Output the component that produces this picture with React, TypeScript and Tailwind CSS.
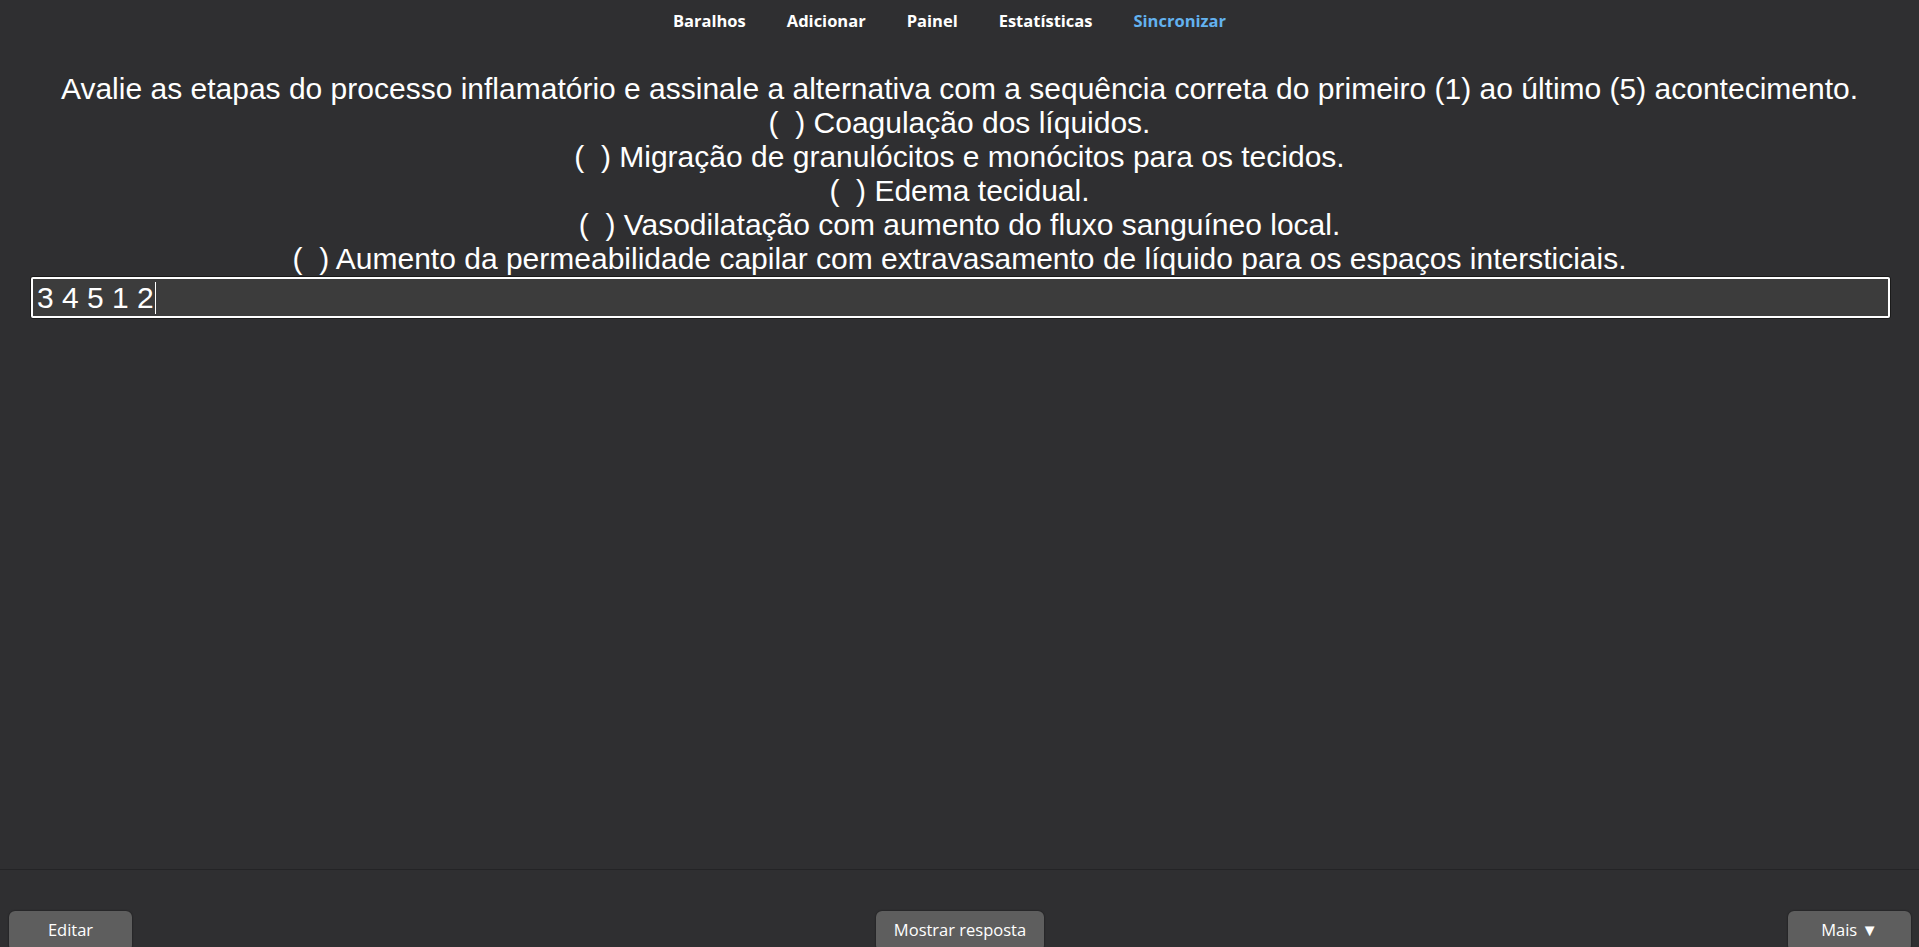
import React from "react";

const lines = [
  "Avalie as etapas do processo inflamatório e assinale a alternativa com a sequência correta do primeiro (1) ao último (5) acontecimento.",
  "(\u00a0\u00a0) Coagulação dos líquidos.",
  "(\u00a0\u00a0) Migração de granulócitos e monócitos para os tecidos.",
  "(\u00a0\u00a0) Edema tecidual.",
  "(\u00a0\u00a0) Vasodilatação com aumento do fluxo sanguíneo local.",
  "(\u00a0\u00a0) Aumento da permeabilidade capilar com extravasamento de líquido para os espaços intersticiais.",
];

const navItems = ["Baralhos", "Adicionar", "Painel", "Estatísticas"];

export default function App() {
  return (
    <div className="h-[947px] w-full bg-[#2f2f31] flex flex-col overflow-hidden">
      <nav className="h-[42px] pt-[10px] pr-[20px] flex justify-center gap-[41px] font-['Open_Sans',sans-serif] font-bold text-[16.5px] leading-[22px] text-white">
        {navItems.map((n) => (
          <span key={n}>{n}</span>
        ))}
        <span className="text-[#63b2ef]">Sincronizar</span>
      </nav>

      <main className="flex-1 pt-[30px] font-['Liberation_Sans',Arial,sans-serif] text-white">
        <div className="text-center text-[30px] leading-[34px]">
          {lines.map((l, i) => (
            <div key={i}>{l}</div>
          ))}
        </div>
        <div className="ml-[30px] mr-[28px] h-[43px] border border-[#1a1a1a] rounded-[3px]">
          <div className="h-full border-2 border-white rounded-[2px] bg-[#3c3c3c] pl-[4px] flex items-center text-[30px] leading-[34px]">
            <span>3 4 5 1 2</span>
            <span className="ml-[1px] w-[1px] h-[32px] bg-white" />
          </div>
        </div>
      </main>

      <footer className="h-[78px] border-t border-[#242426] pt-[41px] pl-[9px] pr-[8px] flex justify-between font-['Open_Sans',sans-serif] text-[16.5px] text-white">
        <button className="w-[123px] h-[40px] rounded-[6px] bg-[#5e5e5e] shadow-[0_0_2px_rgba(0,0,0,0.6)] flex items-start justify-center pt-[7px]">
          Editar
        </button>
        <button className="w-[168px] h-[40px] rounded-[6px] bg-[#5e5e5e] shadow-[0_0_2px_rgba(0,0,0,0.6)] flex items-start justify-center pt-[7px]">
          Mostrar resposta
        </button>
        <button className="w-[123px] h-[40px] rounded-[6px] bg-[#5e5e5e] shadow-[0_0_2px_rgba(0,0,0,0.6)] flex items-start justify-center pt-[7px]">
          Mais ▼
        </button>
      </footer>
    </div>
  );
}
